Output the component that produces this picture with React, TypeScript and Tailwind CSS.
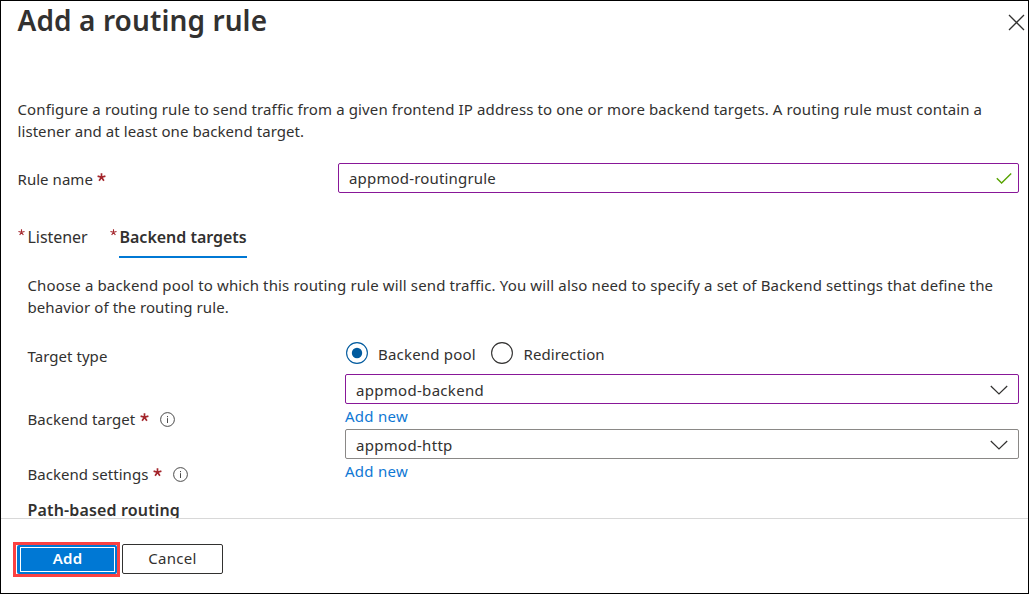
import React from "react";

function Required() {
  return (
    <svg className="h-[9px] w-[9px] shrink-0" viewBox="0 0 9 9" fill="none" stroke="#a4262c" strokeWidth="1.7">
      <path d="M4.5 0.3V4.3M4.5 4.3L0.6 3.1M4.5 4.3L8.4 3.1M4.5 4.3L2.1 7.8M4.5 4.3L6.9 7.8" />
    </svg>
  );
}

function TabStar() {
  return (
    <svg className="mt-[4px] h-[7px] w-[7px] shrink-0" viewBox="0 0 9 9" fill="none" stroke="#a4262c" strokeWidth="1.4">
      <path d="M4.5 0.3V4.3M4.5 4.3L0.6 3.1M4.5 4.3L8.4 3.1M4.5 4.3L2.1 7.8M4.5 4.3L6.9 7.8" />
    </svg>
  );
}

function Info() {
  return (
    <svg className="h-[15px] w-[15px] shrink-0" viewBox="0 0 15 15" fill="none" stroke="#4a4a4a">
      <circle cx="7.5" cy="7.5" r="6.9" strokeWidth="1" />
      <path d="M7.5 6.2V11M7.5 4V5.2" strokeWidth="1" />
    </svg>
  );
}

function Select({ value, active }: { value: string; active?: boolean }) {
  return (
    <div
      className={
        active
          ? "flex h-[30px] items-center justify-between rounded-[2px] border border-[#881798] pr-[10px] pl-[10px]"
          : "flex h-[30px] items-center justify-between rounded-[2px] border border-[#8a8886] pr-[10px] pl-[10px]"
      }
    >
      <span className="pt-[2px] tracking-[0.3px]">{value}</span>
      <svg className="mt-[1px] h-[10px] w-[18px]" viewBox="0 0 18 10" fill="none" stroke="#323130" strokeWidth="1.2">
        <path d="M0.8 1L9 9L17.2 1" />
      </svg>
    </div>
  );
}

function TargetRow({ label, value, active }: { label: string; value: string; active?: boolean }) {
  return (
    <div className="flex h-[55px]">
      <div className="mt-[34px] flex h-[22px] w-[317.5px] shrink-0 items-center">
        <span className="tracking-[0.04px]">{label}</span>
        <span className="mb-[4px] ml-[4.5px] flex"><Required /></span>
        <span className="ml-[11.5px] flex"><Info /></span>
      </div>
      <div className="flex-1">
        <Select value={value} active={active} />
        <a className="mt-[1px] block leading-[22px] tracking-[0.28px] text-[#0f78d4]">Add new</a>
      </div>
    </div>
  );
}

export default function App() {
  return (
    <div className="flex h-[594px] w-[1029px] flex-col overflow-hidden border border-black bg-white font-['Noto_Sans',sans-serif] text-[15px] leading-[22px] text-[#323130]">
      <main className="flex h-[517px] shrink-0 flex-col overflow-hidden pr-[9px] pl-[16.5px]">
        <header className="flex h-[97px] shrink-0 items-start justify-between">
          <h1 className="whitespace-nowrap text-[28px] leading-[38px] font-semibold tracking-[0.1px]">Add a routing rule</h1>
          <svg className="mt-[13px] -mr-[6px] h-[17px] w-[17px]" viewBox="0 0 17 17" fill="none" stroke="#323130" strokeWidth="1.3">
            <path d="M1 1L16 16M16 1L1 16" />
          </svg>
        </header>
        <p className="h-[44px] shrink-0 whitespace-nowrap">
          <span className="tracking-[0.123px]">Configure a routing rule to send traffic from a given frontend IP address to one or more backend targets. A routing rule must contain a</span>
          <br />
          <span className="tracking-[0.07px]">listener and at least one backend target.</span>
        </p>
        <div className="mt-[21px] flex h-[30px] shrink-0 items-center">
          <div className="flex w-[320.5px] shrink-0 items-center pt-[2px]">
            <span className="tracking-[0.05px]">Rule name</span>
            <span className="mb-[4px] ml-[4.5px] flex"><Required /></span>
          </div>
          <div className="flex h-[30px] flex-1 items-center justify-between rounded-[2px] border border-[#881798] pr-[6px] pl-[10px]">
            <span className="tracking-[0.17px]">appmod-routingrule</span>
            <svg className="h-[11px] w-[16px]" viewBox="0 0 16 11" fill="none" stroke="#57a300" strokeWidth="1.4">
              <path d="M0.8 5.2L5.6 10L15.2 0.6" />
            </svg>
          </div>
        </div>
        <nav className="mt-[32px] flex h-[33px] shrink-0 text-[16px] leading-[24px]">
          <div className="flex w-[92px]">
            <span className="flex w-[10px]"><TabStar /></span>
            <span className="tracking-[-0.05px]">Listener</span>
          </div>
          <div className="flex">
            <span className="flex w-[9.5px]"><TabStar /></span>
            <span className="h-[33px] w-[128px] whitespace-nowrap border-b-2 border-[#0078d4] pl-[0.5px] font-semibold tracking-[-0.02px]">Backend targets</span>
          </div>
        </nav>
        <section className="mt-[16px] shrink-0 pl-[10px]">
          <p className="whitespace-nowrap">
            <span className="tracking-[0.138px]">Choose a backend pool to which this routing rule will send traffic. You will also need to specify a set of Backend settings that define the</span>
            <br />
            <span className="tracking-[0.08px]">behavior of the routing rule.</span>
          </p>
          <div className="mt-[23px] flex h-[33px]">
            <span className="w-[318.5px] pt-[4px] tracking-[0.05px]">Target type</span>
            <div className="flex h-[24px] items-center">
              <svg className="h-[22px] w-[22px]" viewBox="0 0 22 22">
                <circle cx="11" cy="11" r="10.4" fill="none" stroke="#005a9e" strokeWidth="1.1" />
                <circle cx="11" cy="11" r="5.2" fill="#005a9e" />
              </svg>
              <span className="ml-[10px] w-[113px] pt-[2px] tracking-[0.2px]">Backend pool</span>
              <svg className="h-[22px] w-[22px]" viewBox="0 0 22 22">
                <circle cx="11" cy="11" r="10.4" fill="none" stroke="#323130" strokeWidth="1.1" />
              </svg>
              <span className="ml-[10.5px] pt-[2px] tracking-[0.1px]">Redirection</span>
            </div>
          </div>
          <TargetRow label="Backend target" value="appmod-backend" active />
          <TargetRow label="Backend settings" value="appmod-http" />
          <h2 className="mt-[14px] text-[16px] leading-[24px] font-semibold tracking-[0.15px]">Path-based routing</h2>
        </section>
      </main>
      <footer className="flex flex-1 border-t border-[#d8d8d8] pt-[23px] pl-[12px]">
        <div className="flex h-[35px] w-[107px] items-start border-[3px] border-[#fb4141] pl-[1px]">
          <button className="h-[29px] w-[100px] rounded-[2px] bg-[#0078d4] py-[2px] pr-[2px] pl-[3px] text-white">
            <span className="flex h-full items-center justify-center border border-white pb-[3px] font-semibold tracking-[0.2px]">Add</span>
          </button>
        </div>
        <button className="mt-[2px] ml-[2px] h-[30px] w-[101px] rounded-[2px] border border-[#323130] pb-[2px] tracking-[0.3px]">Cancel</button>
      </footer>
    </div>
  );
}
